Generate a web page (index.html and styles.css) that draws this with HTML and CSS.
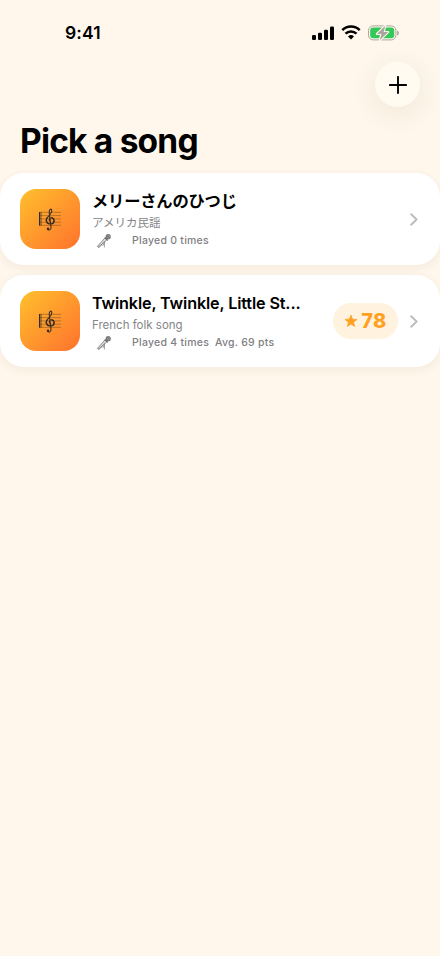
FILE: index.html
```html
<!DOCTYPE html>
<html lang="en">
<head>
<meta charset="utf-8">
<title>Pick a song</title>
<link rel="stylesheet" href="styles.css">
</head>
<body>
<svg width="0" height="0" class="defs" aria-hidden="true">
  <symbol id="score" viewBox="0 0 26 26">
    <g stroke="#49351d" stroke-opacity=".6" stroke-width=".65">
      <path d="M3 6.3H24M3 9.6H24M3 12.9H24M3 16.2H24M3 19.3H24"/>
    </g>
    <path d="M2.7 5.9V19.7" stroke="#302b24" stroke-width="1.4"/>
    <path d="M4.5 5.9V19.7" stroke="#302b24" stroke-opacity=".7" stroke-width=".5"/>
    <g fill="none" stroke="#352b20" stroke-linecap="round">
      <path d="M13.6 15.7c-2.2-.9-1.7-3.8.6-3.9 3.5-.1 4.2 5.6.1 6.2-4.3.5-6.2-3.8-3.9-6.6 1.5-1.9 4.4-3.6 4.4-6.4 0-3.4-2.8-1.8-2.6 1.5l1.8 14.6c.4 3-2.6 3.7-3.5 2" stroke-width="1.05"/>
      <path d="M10.1 12c-1.7 2.4-.8 5.2 1.9 5.9M14.8 11.9c3 .6 3 4.9.3 5.8" stroke-width="1.2"/>
    </g>
    <circle cx="11" cy="22.8" r="1.2" fill="#352b20"/>
  </symbol>
  <symbol id="mic" viewBox="0 0 16 16">
    <path d="M8.9 5L1.3 13.5l.8.8 8.7-7.2z" fill="#ddd" stroke="#777" stroke-width=".8" stroke-linejoin="round"/>
    <path d="M2 14c1.5.8 2.2-.4 3.4-1.9L8.4 8.7v5.7M8.4 10.3l-1.8 2.5" fill="none" stroke="#777" stroke-width=".7"/>
    <path d="M8.8 4.4l3 3" stroke="#606060" stroke-width="1.2"/>
    <circle cx="12.2" cy="3.7" r="2.6" fill="#777"/>
    <path d="M10.7 3l2.4 2.4M12 1.8l2.2 2.2" stroke="#bbb" stroke-width=".5"/>
  </symbol>
  <symbol id="chevron" viewBox="0 0 8 13">
    <path d="M1.2 1.2L6.6 6.5 1.2 11.8" fill="none" stroke="#bcbcbe" stroke-width="1.9" stroke-linecap="round" stroke-linejoin="round"/>
  </symbol>
</svg>
<header class="status">
  <span class="time">9:41</span>
  <div class="indicators">
    <svg width="22" height="14" viewBox="0 0 22 14"><rect x="0" y="9" width="4" height="5" rx="1.2"/><rect x="6" y="6.8" width="4" height="7.2" rx="1.2"/><rect x="12" y="3.7" width="4" height="10.3" rx="1.2"/><rect x="18" y=".5" width="4" height="13.5" rx="1.2"/></svg>
    <svg class="wifi" width="20" height="15" viewBox="0 0 20 15"><g fill="none" stroke="#000" stroke-width="2.5"><path d="M1.3 5.1a12.5 12.5 0 0 1 17.4 0"/><path d="M4.5 8.6a8 8 0 0 1 11 0"/></g><path d="M10 14.5l-3-3a4.4 4.4 0 0 1 6 0z"/></svg>
    <svg class="battery" width="32" height="16" viewBox="0 0 32 16"><rect x=".5" y=".9" width="27.4" height="14" rx="4.6" fill="none" stroke="#aaa69f"/><rect x="2.2" y="2.6" width="24" height="10.6" rx="3" fill="#34c759"/><path d="M29.2 5.4c2.3.5 2.3 4.5 0 5z" fill="#aaa69f"/><path d="M17.2 .8L9 8.9h4.5L11.7 15.3l8.5-8.3h-4.5z" fill="#aaa69f" stroke="#fff7ec" stroke-width="2.2" stroke-linejoin="round" paint-order="stroke"/></svg>
  </div>
</header>
<nav class="toolbar">
  <button class="add" aria-label="Add song"><svg width="18" height="18" viewBox="0 0 18 18"><path d="M9 .9V17.1M.9 9H17.1" stroke="#000" stroke-width="1.9" stroke-linecap="round"/></svg></button>
</nav>
<h1>Pick a song</h1>
<main class="songs">
  <article class="card">
    <div class="tile"><svg width="26" height="26"><use href="#score"/></svg></div>
    <div class="info">
      <h2 class="title jp">メリーさんのひつじ</h2>
      <p class="origin">アメリカ民謡</p>
      <div class="stats"><svg class="mic" width="16" height="16"><use href="#mic"/></svg><span>Played 0 times</span></div>
    </div>
    <svg class="chevron" width="8" height="13"><use href="#chevron"/></svg>
  </article>
  <article class="card">
    <div class="tile"><svg width="26" height="26"><use href="#score"/></svg></div>
    <div class="info">
      <h2 class="title">Twinkle, Twinkle, Little St...</h2>
      <p class="origin">French folk song</p>
      <div class="stats"><svg class="mic" width="16" height="16"><use href="#mic"/></svg><span>Played 4 times</span><span>Avg. 69 pts</span></div>
    </div>
    <div class="score"><svg width="14" height="14" viewBox="0 0 14 14"><path d="M7 1l1.55 4.2 4.5.2-3.5 2.8 1.2 4.3L7 10l-3.75 2.5 1.2-4.3-3.5-2.8 4.5-.2z" fill="#ffa01f" stroke="#ffa01f" stroke-width=".7" stroke-linejoin="round"/></svg><span>78</span></div>
    <svg class="chevron" width="8" height="13"><use href="#chevron"/></svg>
  </article>
</main>
</body>
</html>
```
FILE: styles.css
```css
* { box-sizing: border-box; }
body {
  margin: 0;
  min-height: 956px;
  background: #fff7ec;
  color: #000;
  font-family: Inter, "Noto Sans CJK JP", sans-serif;
}
.defs { display: block; }
h1, h2, p { margin: 0; }
.status {
  height: 62px;
  padding: 22px 40px 0 65px;
  display: flex;
  justify-content: space-between;
  align-items: flex-start;
}
.time { font-size: 17.5px; line-height: 21px; font-weight: 600; letter-spacing: .1px; }
.indicators { display: flex; align-items: center; padding-top: 2.5px; }
.wifi { margin-left: 7px; }
.battery { margin-left: 7px; }
.toolbar { display: flex; justify-content: flex-end; padding-right: 20px; }
.add {
  width: 45px;
  height: 45px;
  padding: 0;
  border: 0;
  border-radius: 50%;
  background: #fffbf0;
  box-shadow: 0 6px 28px rgba(90, 60, 20, .09);
  display: grid;
  place-items: center;
}
h1 {
  height: 66px;
  padding: 14px 20px 0;
  font-size: 33.5px;
  line-height: 41px;
  font-weight: 700;
  letter-spacing: -.8px;
}
.songs { display: flex; flex-direction: column; gap: 10px; }
.card {
  height: 92px;
  padding: 0 22px 0 20px;
  border-radius: 24px;
  background: #fff;
  box-shadow: 0 3px 10px rgba(100, 60, 20, .07);
  display: flex;
  align-items: center;
}
.tile {
  flex: none;
  width: 60px;
  height: 60px;
  border-radius: 16px;
  background: linear-gradient(135deg, #ffc02d, #ff722d);
  display: grid;
  place-items: center;
}
.info { flex: 1; min-width: 0; margin-left: 12px; padding-top: 3px; white-space: nowrap; }
.title { font-size: 16.2px; line-height: 21px; font-weight: 600; letter-spacing: -.14px; }
.jp { font-size: 16.3px; letter-spacing: -.2px; }
.origin { margin-top: 3px; font-size: 11.5px; line-height: 16px; color: #858587; }
.stats {
  height: 19px;
  display: flex;
  align-items: center;
  gap: 6px;
  font-size: 10.5px;
  line-height: 16px;
  font-weight: 500;
  letter-spacing: .25px;
  color: #808082;
}
.mic { margin: 0 14px 0 4px; }
.score {
  width: 65px;
  height: 36px;
  margin-right: 12px;
  border-radius: 18px;
  background: #fff3df;
  color: #ffa01f;
  font-size: 20px;
  font-weight: 800;
  letter-spacing: .4px;
  display: flex;
  align-items: center;
  justify-content: center;
  gap: 3px;
}
.chevron { flex: none; }
```
